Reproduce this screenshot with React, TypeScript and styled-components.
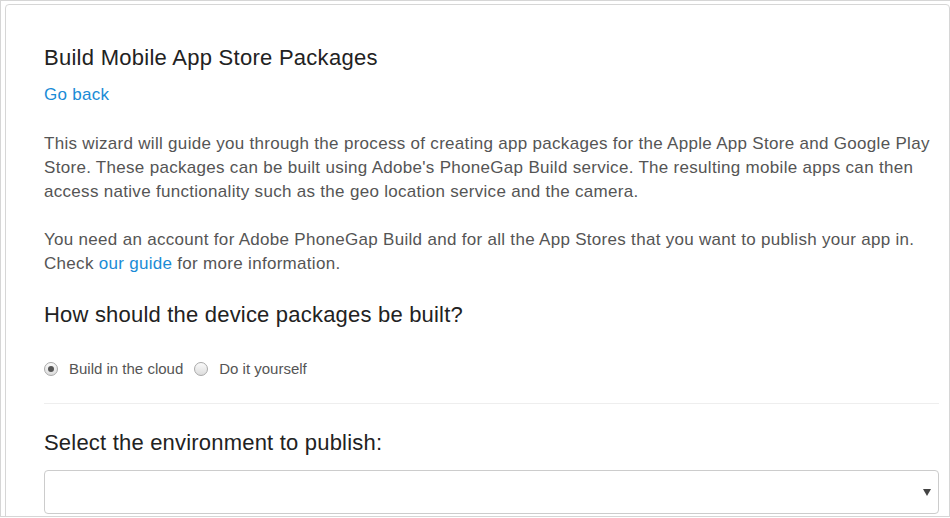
import React from "react";
import styled, { createGlobalStyle } from "styled-components";

const Global = createGlobalStyle`
  html, body { margin: 0; padding: 0; background: #fff; }
  body { font-family: "Liberation Sans", Arial, sans-serif; }
  * { box-sizing: border-box; }
`;

const Frame = styled.div`
  width: 950px;
  height: 517px;
  border-top: 1px solid #d6d6d6;
  border-left: 1px solid #d6d6d6;
  border-bottom: 1px solid #d6d6d6;
  padding: 3px 0 0 4px;
  overflow: hidden;
`;

const Card = styled.div`
  border: 1px solid #d6d6d6;
  border-radius: 4px;
  padding: 40px 0 0 38px;
  height: 560px;
`;

const Title = styled.h1`
  margin: 0;
  font-size: 22px;
  font-weight: 400;
  letter-spacing: 0.27px;
  line-height: 26px;
  color: #222;
`;

const Link = styled.a`
  color: #1a8bd6;
  text-decoration: none;
  cursor: pointer;
`;

const BackLink = styled(Link)`
  display: block;
  margin-top: 13px;
  font-size: 17px;
  letter-spacing: 0.3px;
  line-height: 22px;
`;

const Para = styled.p<{ $top: number }>`
  margin: ${(p) => p.$top}px 0 0;
  font-size: 17px;
  letter-spacing: 0.3px;
  line-height: 24px;
  color: #555;
  white-space: nowrap;
`;

const SectionTitle = styled.h2<{ $top: number }>`
  margin: ${(p) => p.$top}px 0 0;
  font-size: 22px;
  font-weight: 400;
  letter-spacing: 0.2px;
  line-height: 26px;
  color: #222;
`;

const RadioRow = styled.div`
  display: flex;
  align-items: center;
  gap: 11px;
  margin-top: 32px;
  font-size: 15px;
  color: #555;
`;

const RadioOption = styled.label`
  display: flex;
  align-items: center;
  gap: 11px;
`;

const RadioDot = styled.span<{ $checked?: boolean }>`
  width: 14px;
  height: 14px;
  border-radius: 50%;
  border: 1px solid #a9a9a9;
  background: linear-gradient(#fafafa, #dcdcdc);
  display: inline-flex;
  align-items: center;
  justify-content: center;
  &::after {
    content: "";
    width: 6px;
    height: 6px;
    border-radius: 50%;
    background: ${(p) => (p.$checked ? "#555" : "transparent")};
  }
`;

const Divider = styled.hr`
  border: 0;
  border-top: 1px solid #eee;
  margin: 26px 0 0;
  width: 895px;
`;

const SelectBox = styled.div`
  margin-top: 14px;
  width: 895px;
  height: 44px;
  border: 1px solid #ccc;
  border-radius: 4px;
  display: flex;
  align-items: center;
  justify-content: flex-end;
  padding-right: 7px;
`;

const Arrow = styled.span`
  width: 0;
  height: 0;
  border-left: 4px solid transparent;
  border-right: 4px solid transparent;
  border-top: 7px solid #444;
  margin-top: 1px;
`;

export default function App() {
  return (
    <>
      <Global />
      <Frame>
        <Card>
          <Title>Build Mobile App Store Packages</Title>
          <BackLink>Go back</BackLink>
          <Para $top={26}>
            This wizard will guide you through the process of creating app packages for the Apple App Store and Google Play
            <br />
            Store. These packages can be built using Adobe's PhoneGap Build service. The resulting mobile apps can then
            <br />
            access native functionality such as the geo location service and the camera.
          </Para>
          <Para $top={24}>
            You need an account for Adobe PhoneGap Build and for all the App Stores that you want to publish your app in.
            <br />
            Check <Link>our guide</Link> for more information.
          </Para>
          <SectionTitle $top={26}>How should the device packages be built?</SectionTitle>
          <RadioRow>
            <RadioOption>
              <RadioDot $checked />
              Build in the cloud
            </RadioOption>
            <RadioOption>
              <RadioDot />
              Do it yourself
            </RadioOption>
          </RadioRow>
          <Divider />
          <SectionTitle $top={26}>Select the environment to publish:</SectionTitle>
          <SelectBox>
            <Arrow />
          </SelectBox>
        </Card>
      </Frame>
    </>
  );
}
